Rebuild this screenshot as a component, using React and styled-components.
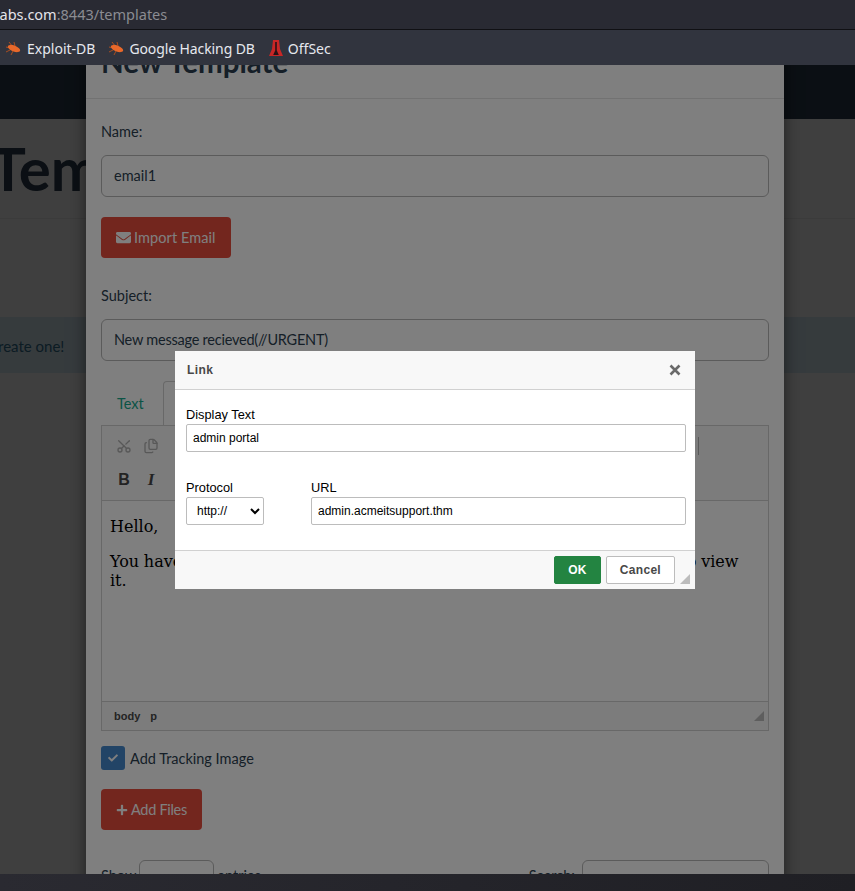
import React from 'react'
import styled, { createGlobalStyle } from 'styled-components'
import { FaEnvelope, FaPlus, FaCheck } from 'react-icons/fa'
import { Scissors, Files } from 'lucide-react'

const GlobalStyle = createGlobalStyle`
  html, body {
    margin: 0;
    padding: 0;
    height: 100%;
    overflow: hidden;
    background: #404040;
  }
  * { box-sizing: border-box; }
`

const Screen = styled.div`
  width: 855px;
  height: 891px;
  display: flex;
  flex-direction: column;
  overflow: hidden;
  font-family: Lato, "Liberation Sans", sans-serif;
`

const UrlBar = styled.div`
  height: 30px;
  flex: none;
  background: #292a33;
  border-bottom: 1px solid #101014;
  overflow: hidden;
  white-space: nowrap;
  font: 14.5px/28px "Noto Sans", sans-serif;
  color: #8b8c92;
`

const UrlHost = styled.span`
  color: #e4e4ea;
  margin-left: -32px;
  display: inline-block;
`

const Bookmarks = styled.div`
  height: 35px;
  flex: none;
  background: #31343e;
  display: flex;
  align-items: center;
  padding: 2px 0 0 6px;
  gap: 14px;
  font: 14px "Noto Sans", sans-serif;
  color: #e6e8ee;
`

const Bookmark = styled.div`
  display: flex;
  align-items: center;
  gap: ${p => p.$gap || 6}px;
  letter-spacing: ${p => p.$ls || 0}px;
`

const Viewport = styled.div`
  flex: 1;
  min-height: 0;
  position: relative;
  overflow: hidden;
  background: #fff;
`

const BottomBar = styled.div`
  height: 17px;
  flex: none;
  background: linear-gradient(90deg, #2a2a31, #1f1f24);
`

const Navbar = styled.div`
  height: 54px;
  background: #2c3e50;
`

const PageTitle = styled.h1`
  margin: 14px 0 0 -10px;
  font-size: 60px;
  line-height: 70px;
  font-weight: 700;
  color: #2c3e50;
  white-space: nowrap;
`

const Rule = styled.div`
  height: 1px;
  margin-top: 15px;
  background: #eee;
`

const AlertBand = styled.div`
  margin-top: 98px;
  height: 56px;
  background: #d9edf7;
  color: #31708f;
  font-size: 15px;
  line-height: 58px;
  white-space: nowrap;
  margin-left: -12px;
`

const Backdrop = styled.div`
  position: absolute;
  inset: 0;
  background: rgba(0, 0, 0, 0.5);
`

const Modal = styled.div`
  position: absolute;
  left: 86px;
  top: -30px;
  width: 698px;
  height: 900px;
  background: #fff;
  box-shadow: 0 5px 15px rgba(0, 0, 0, 0.5);
  color: #2c3e50;
  font-size: 14.5px;
`

const ModalHeader = styled.div`
  height: 64px;
  border-bottom: 1px solid #e5e5e5;
  padding: 9px 15px 0;
`

const ModalTitle = styled.h4`
  margin: 0;
  font-size: 29.5px;
  line-height: 36px;
  font-weight: 700;
`

const ModalBody = styled.div`
  padding: 22px 15px 0;
  display: flex;
  flex-direction: column;
`

const Label = styled.label`
  line-height: 22px;
  color: #2c3e50;
  margin-bottom: 12px;
`

const TextField = styled.div`
  height: 42px;
  border: 1px solid #b6b6b6;
  border-radius: 6px;
  padding: 0 12px;
  line-height: 39px;
  color: #2c3e50;
  letter-spacing: ${p => p.$ls || 0}px;
  margin-bottom: 20px;
`

const DangerButton = styled.div`
  align-self: flex-start;
  height: 41px;
  display: flex;
  align-items: center;
  gap: 3px;
  padding: 0 15px;
  border-radius: 4px;
  background: #e74c3c;
  color: #fff;
  letter-spacing: ${p => p.$ls || 0}px;
  margin-bottom: ${p => p.$mb}px;
`

const Tabs = styled.div`
  display: flex;
  height: 44px;
`

const Tab = styled.div`
  width: ${p => (p.$active ? 80 : 62)}px;
  padding: 1px 16px 0;
  line-height: 44px;
  color: ${p => (p.$active ? '#2c3e50' : '#18a88c')};
  ${p => p.$active && `
    margin-bottom: -1px;
    background: #fff;
    border: 1px solid #d1d1d1;
    border-bottom: 0;
    border-radius: 4px 4px 0 0;
  `}
`

const Editor = styled.div`
  height: 306px;
  border: 1px solid #d1d1d1;
  display: flex;
  flex-direction: column;
`

const Toolbar = styled.div`
  height: 75px;
  flex: none;
  background: #f8f8f8;
  border-bottom: 1px solid #d1d1d1;
  padding: 10px 8px 0 14px;
  display: flex;
  flex-direction: column;
  gap: 14px;
`

const ToolRow = styled.div`
  height: 20px;
  display: flex;
  align-items: center;
  gap: 11px;
  color: #474747;
`

const CutIcon = styled(Scissors)`
  transform: rotate(-90deg);
`

const ToolSeparator = styled.div`
  width: 1px;
  height: 18px;
  background: #b4b4b4;
  margin-left: auto;
  margin-right: 61px;
`

const ToolGlyph = styled.span`
  width: 16px;
  text-align: center;
  font: ${p => (p.$italic ? 'italic 700 17px "Liberation Serif"' : '700 16px "Liberation Sans"')}, serif;
  color: #474747;
`

const Content = styled.div`
  flex: 1;
  padding: 16px 20px 0 8px;
  background: #fff;
  color: #000;
  font: 16px/19px "DejaVu Serif", serif;
`

const ContentPara = styled.p`
  margin: 0 0 16px;
  word-spacing: -0.35px;
`

const StatusBar = styled.div`
  height: 29px;
  flex: none;
  background: #f8f8f8;
  border-top: 1px solid #d1d1d1;
  display: flex;
  align-items: center;
  justify-content: space-between;
  padding: 0 4px 0 12px;
  font: 700 11px "Liberation Sans", sans-serif;
  color: #484848;
`

const PathTag = styled.span`
  margin-right: 10px;
`

const Resizer = styled.div`
  width: 0;
  height: 0;
  border-style: solid;
  border-width: 0 0 10px 10px;
  border-color: transparent transparent #bcbcbc transparent;
`

const ResizerSlot = styled.div`
  position: absolute;
  right: 5px;
  bottom: 5px;
`

const CheckRow = styled.div`
  display: flex;
  align-items: center;
  gap: 5px;
  margin: 15px 0 19px;
`

const CheckBox = styled.div`
  width: 24px;
  height: 24px;
  border-radius: 3px;
  background: #4488cc;
  color: #fff;
  font-size: 10px;
  display: flex;
  align-items: center;
  justify-content: center;
`

const TableControls = styled.div`
  margin-top: 30px;
  display: flex;
  justify-content: space-between;
`

const ControlGroup = styled.div`
  display: flex;
  align-items: flex-start;
  gap: ${p => p.$gap}px;
  line-height: 31px;
`

const SmallBox = styled.div`
  width: ${p => p.$w}px;
  height: 42px;
  border: 1px solid #b6b6b6;
  border-radius: 6px;
`

const Dialog = styled.div`
  position: absolute;
  left: 175px;
  top: 286px;
  width: 520px;
  height: 238px;
  background: #fff;
  display: flex;
  flex-direction: column;
  font-family: "Liberation Sans", Arial, sans-serif;
  font-size: 12px;
  color: #000;
`

const DialogHeader = styled.div`
  height: 39px;
  flex: none;
  background: #f8f8f8;
  border-bottom: 1px solid #d1d1d1;
  display: flex;
  align-items: center;
  justify-content: space-between;
  padding: 0 14px 0 12px;
`

const DialogTitle = styled.span`
  font-weight: 700;
  font-size: 12px;
  letter-spacing: 0.4px;
  color: #484848;
`

const DialogBody = styled.div`
  flex: 1;
  padding: 18px 9px 0 11px;
`

const Field = styled.div`
  display: flex;
  flex-direction: column;
  flex: ${p => (p.$grow ? 1 : 'none')};
`

const FieldLabel = styled.label`
  font-size: 12.8px;
  line-height: 13px;
  margin-bottom: 3px;
`

const DialogInput = styled.input`
  height: 28px;
  width: 100%;
  border: 1px solid #bcbcbc;
  border-radius: 2px;
  padding: 0 6px;
  font: 12px "Liberation Sans", Arial, sans-serif;
  color: #000;
  background: #fff;
  outline: none;
`

const DialogSelect = styled.select`
  height: 28px;
  width: 78px;
  border: 1px solid #bcbcbc;
  border-radius: 2px;
  padding: 0 6px;
  font: 12px "Liberation Sans", Arial, sans-serif;
  color: #000;
  background: #fff;
`

const FieldRow = styled.div`
  display: flex;
  gap: 47px;
  margin-top: 29px;
`

const DialogFooter = styled.div`
  height: 39px;
  flex: none;
  background: #f8f8f8;
  border-top: 1px solid #d1d1d1;
  display: flex;
  align-items: flex-start;
  justify-content: flex-end;
  gap: 5px;
  padding: 5px 20px 0 0;
  position: relative;
`

const DialogButton = styled.div`
  height: 28px;
  padding: 0 13px;
  border: 1px solid ${p => (p.$primary ? '#238441' : '#bcbcbc')};
  border-radius: 2px;
  background: ${p => (p.$primary ? '#238441' : '#fff')};
  color: ${p => (p.$primary ? '#fff' : '#484848')};
  font-weight: 700;
  letter-spacing: 0.3px;
  line-height: 26px;
`

const BugIcon = () => (
  <svg width="15" height="13" viewBox="0 0 15 13">
    <path d="M3 0l3 4M8 0l1 4M0 5l4 1M0 10l4-2M5 13l2-4" stroke="#a84e22" strokeWidth="1" fill="none" />
    <ellipse cx="8" cy="6.5" rx="6.5" ry="2.9" fill="#e8682a" transform="rotate(22 8 6.5)" />
  </svg>
)

const TorchIcon = () => (
  <svg width="14" height="17" viewBox="0 0 14 17">
    <path d="M4 0h6l1 9 3 7H0l3-7z" fill="#c82626" />
    <path d="M6.2 2h1.6v8.5l2 4.5H4.2l2-4.5z" fill="#2a1216" />
  </svg>
)

const CloseIcon = () => (
  <svg width="12" height="12" viewBox="0 0 12 12">
    <path d="M1.5 1.5l9 9M10.5 1.5l-9 9" stroke="#6a6a6a" strokeWidth="2.6" />
  </svg>
)

export default function App() {
  return (
    <Screen>
      <GlobalStyle />
      <UrlBar>
        <UrlHost>thmlabs.com</UrlHost>:8443/templates
      </UrlBar>
      <Bookmarks>
        <Bookmark><BugIcon />Exploit-DB</Bookmark>
        <Bookmark $gap={5} $ls={-0.1}><BugIcon />Google Hacking DB</Bookmark>
        <Bookmark $gap={5}><TorchIcon />OffSec</Bookmark>
      </Bookmarks>
      <Viewport>
        <Navbar />
        <PageTitle>Templates</PageTitle>
        <Rule />
        <AlertBand>Create one!</AlertBand>
        <Backdrop />
        <Modal>
          <ModalHeader>
            <ModalTitle>New Template</ModalTitle>
          </ModalHeader>
          <ModalBody>
            <Label>Name:</Label>
            <TextField>email1</TextField>
            <DangerButton $mb={27} $ls={0.08}><FaEnvelope size={15} />Import Email</DangerButton>
            <Label>Subject:</Label>
            <TextField $ls={-0.23}>New message recieved(//URGENT)</TextField>
            <Tabs>
              <Tab>Text</Tab>
              <Tab $active>HTML</Tab>
            </Tabs>
            <Editor>
              <Toolbar>
                <ToolRow>
                  <CutIcon size={16} color="#b0b0b0" />
                  <Files size={16} color="#b0b0b0" />
                  <ToolSeparator />
                </ToolRow>
                <ToolRow>
                  <ToolGlyph>B</ToolGlyph>
                  <ToolGlyph $italic>I</ToolGlyph>
                </ToolRow>
              </Toolbar>
              <Content>
                <ContentPara>Hello,</ContentPara>
                <ContentPara>You have received a new message. Please sign in to your admin portal to view it.</ContentPara>
              </Content>
              <StatusBar>
                <span><PathTag>body</PathTag><PathTag>p</PathTag></span>
                <Resizer />
              </StatusBar>
            </Editor>
            <CheckRow>
              <CheckBox><FaCheck /></CheckBox>
              Add Tracking Image
            </CheckRow>
            <DangerButton $mb={0} $ls={-0.3}><FaPlus size={12} />Add Files</DangerButton>
            <TableControls>
              <ControlGroup $gap={3}>Show <SmallBox $w={75} /> entries</ControlGroup>
              <ControlGroup $gap={7}>Search: <SmallBox $w={187} /></ControlGroup>
            </TableControls>
          </ModalBody>
        </Modal>
        <Backdrop />
        <Dialog>
          <DialogHeader>
            <DialogTitle>Link</DialogTitle>
            <CloseIcon />
          </DialogHeader>
          <DialogBody>
            <Field>
              <FieldLabel>Display Text</FieldLabel>
              <DialogInput readOnly value="admin portal" />
            </Field>
            <FieldRow>
              <Field>
                <FieldLabel>Protocol</FieldLabel>
                <DialogSelect defaultValue="http://">
                  <option>http://</option>
                  <option>https://</option>
                  <option>ftp://</option>
                </DialogSelect>
              </Field>
              <Field $grow>
                <FieldLabel>URL</FieldLabel>
                <DialogInput readOnly value="admin.acmeitsupport.thm" />
              </Field>
            </FieldRow>
          </DialogBody>
          <DialogFooter>
            <DialogButton $primary>OK</DialogButton>
            <DialogButton>Cancel</DialogButton>
            <ResizerSlot><Resizer /></ResizerSlot>
          </DialogFooter>
        </Dialog>
      </Viewport>
      <BottomBar />
    </Screen>
  )
}
